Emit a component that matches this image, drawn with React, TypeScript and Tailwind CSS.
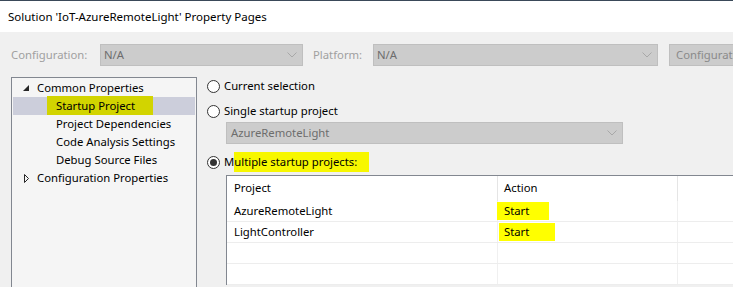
import React from 'react';

const font = { fontFamily: '"Noto Sans", "Open Sans", sans-serif' };

const Chevron: React.FC = () => (
  <svg width="10" height="6" viewBox="0 0 10 6" className="shrink-0">
    <polyline points="0.5,0.5 5,5 9.5,0.5" fill="none" stroke="#a8a8a8" strokeWidth="1" />
  </svg>
);

const Radio: React.FC<{ checked?: boolean }> = ({ checked }) => (
  <span className="w-[13px] h-[13px] rounded-full border border-[#333333] bg-white flex items-center justify-center shrink-0">
    {checked && <span className="w-[7px] h-[7px] rounded-full bg-[#333333]" />}
  </span>
);

const TreeRow: React.FC<{ indent?: boolean; selected?: boolean; children: React.ReactNode; arrow?: 'open' | 'closed' }> = ({
  indent,
  selected,
  children,
  arrow,
}) => (
  <div className={`h-[18px] flex items-center whitespace-nowrap ${selected ? 'bg-[#cccedb]' : ''}`}>
    <span className="w-[16px] flex justify-end shrink-0">
      {arrow === 'open' && (
        <svg width="6" height="6" viewBox="0 0 6 6">
          <polygon points="6,0 6,6 0,6" fill="#262626" />
        </svg>
      )}
      {arrow === 'closed' && (
        <svg width="5" height="9" viewBox="0 0 5 9">
          <polygon points="0.5,0.5 4.5,4.5 0.5,8.5" fill="none" stroke="#262626" strokeWidth="1" />
        </svg>
      )}
    </span>
    <span className={indent ? 'pl-[27px]' : 'pl-[8px]'}>{children}</span>
  </div>
);

export default function App() {
  return (
    <div className="w-[733px] h-[287px] overflow-hidden bg-[#f0f0f0] text-[11.3px] text-black" style={font}>
      <div className="h-px bg-[#3a4959]" />
      <div className="h-[31px] bg-white flex items-center pl-[8px] text-[11.5px]">
        Solution 'IoT-AzureRemoteLight' Property Pages
      </div>

      {/* configuration row */}
      <div className="mt-[12px] h-[22px] flex items-center text-[#a0a0a0] whitespace-nowrap">
        <span className="w-[100px] shrink-0 pl-[11px]">Configuration:</span>
        <div className="w-[203px] shrink-0 h-[22px] bg-[#cccccc] border border-[#bfbfbf] flex items-center justify-between pl-[3px] pr-[5px] text-[#6d6d6d]">
          <span>N/A</span>
          <Chevron />
        </div>
        <span className="w-[70px] shrink-0 pl-[10px]">Platform:</span>
        <div className="w-[285px] shrink-0 h-[22px] bg-[#cccccc] border border-[#bfbfbf] flex items-center justify-between pl-[3px] pr-[5px] text-[#6d6d6d]">
          <span>N/A</span>
          <Chevron />
        </div>
        <div className="ml-[11px] w-[90px] shrink-0 h-[22px] bg-[#cccccc] border border-[#bfbfbf] flex items-center pl-[6px] text-[#8a8a8a] overflow-hidden">
          Configuration Manager...
        </div>
      </div>

      <div className="mt-[11px] flex">
        {/* tree */}
        <div className="ml-[11px] w-[186px] shrink-0 h-[220px] border border-[#828790] bg-[#f5f5f5] p-px">
          <TreeRow arrow="open">Common Properties</TreeRow>
          <TreeRow indent selected>
            <span className="bg-[#d2d400] pl-[9px] pr-[18px] -ml-[9px] py-[2px]">Startup Project</span>
          </TreeRow>
          <TreeRow indent>Project Dependencies</TreeRow>
          <TreeRow indent>Code Analysis Settings</TreeRow>
          <TreeRow indent>Debug Source Files</TreeRow>
          <TreeRow arrow="closed">Configuration Properties</TreeRow>
        </div>

        {/* startup options */}
        <div className="ml-[10px] w-[600px] shrink-0 flex flex-col whitespace-nowrap">
          <div className="h-[18px] flex items-center gap-[4px]">
            <Radio />
            <span>Current selection</span>
          </div>
          <div className="mt-[7px] h-[18px] flex items-center gap-[4px]">
            <Radio />
            <span>Single startup project</span>
          </div>
          <div className="mt-[2px] ml-[19px] w-[397px] h-[22px] bg-[#cccccc] border border-[#bfbfbf] flex items-center justify-between pl-[4px] pr-[5px] text-[#6d6d6d]">
            <span>AzureRemoteLight</span>
            <Chevron />
          </div>
          <div className="mt-[9px] h-[18px] flex items-center gap-[4px]">
            <Radio checked />
            <span>
              M<span className="bg-[#f7f700] pr-[12px] pt-[2px] pb-[3px]">ultiple startup projects:</span>
            </span>
          </div>

          {/* project table */}
          <div className="mt-[4px] ml-[19px] w-[560px] border-t border-l border-[#828790] bg-white">
            <div className="h-[25px] flex items-center">
              <div className="w-[271px] shrink-0 h-full flex items-center pl-[7px] border-r border-[#e5e5e5]">Project</div>
              <div className="w-[180px] shrink-0 h-full flex items-center pl-[6px] border-r border-[#e5e5e5]">Action</div>
              <div className="flex-1" />
            </div>
            {[
              ['AzureRemoteLight', 'Start', 'pl-[7px] pr-[20px] ml-[-1px]'],
              ['LightController', 'Start', 'pl-[5px] pr-[26px] ml-[1px]'],
              ['', '', ''],
              ['', '', ''],
            ].map(([name, action, hl], i) => (
              <div key={i} className="h-[21px] flex border-b border-[#ededed]">
                <div className="w-[271px] shrink-0 flex items-center pl-[7px] border-r border-[#f0f0f0]">{name}</div>
                <div className="w-[180px] shrink-0 flex items-center border-r border-[#f0f0f0]">
                  {action && <span className={`bg-[#ffff00] py-[1px] ${hl}`}>{action}</span>}
                </div>
                <div className="flex-1" />
              </div>
            ))}
          </div>
        </div>
      </div>
    </div>
  );
}
